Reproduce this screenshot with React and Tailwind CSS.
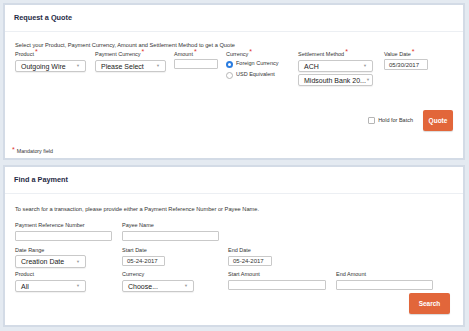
import React from "react";

const Req = () => <span className="text-[7px] text-[#e0302a] leading-none relative -top-[2px] ml-[1px]">*</span>;

const Select = ({ children, w, h = "h-[12px]" }) => (
  <div className={`${w} ${h} bg-white border border-[#c9c9c9] rounded-[2px] flex items-center justify-between pl-[5px] pr-[5px] shadow-[0_1px_1px_rgba(0,0,0,0.06)]`}>
    <span className="text-[7px] leading-none text-[#222] whitespace-nowrap">{children}</span>
    <span className="text-[4px] leading-none text-[#999]">▼</span>
  </div>
);

const Input = ({ w, h = "h-[10px]", value }) => (
  <div className={`${w} ${h} bg-white border border-[#c9c9c9] rounded-[1px] flex items-center pl-[4px]`}>
    {value && <span className="text-[6px] leading-none text-[#333] whitespace-nowrap">{value}</span>}
  </div>
);

const Label = ({ children, req }) => (
  <div className="text-[5.5px] leading-[7px] text-[#333] whitespace-nowrap">
    {children}
    {req && <Req />}
  </div>
);

export default function App() {
  return (
    <div
      className="w-[469px] h-[331px] bg-[#e4eaf1] pt-[3px] pl-[3px] pr-[4px] flex flex-col gap-[5px]"
      style={{ fontFamily: '"Liberation Sans", Arial, sans-serif' }}
    >
      {/* Panel 1 */}
      <div className="h-[157px] bg-white border-2 border-[#d3dbe6] flex flex-col">
        <div className="h-[27px] border-b border-[#eceff3] flex items-center pl-[9px]">
          <span className="text-[7.3px] font-bold text-[#1f2b45]">Request a Quote</span>
        </div>
        <div className="pl-[10px] pr-[10px] flex flex-col flex-1">
          <p className="mt-[10px] text-[5.7px] leading-[7px] text-[#333] whitespace-nowrap">
            Select your Product, Payment Currency, Amount and Settlement Method to get a Quote
          </p>
          <div className="flex mt-[1px]">
            <div className="w-[80px] flex flex-col">
              <Label req>Product</Label>
              <div className="mt-[2px]"><Select w="w-[71px]">Outgoing Wire</Select></div>
            </div>
            <div className="w-[79px] flex flex-col">
              <Label req>Payment Currency</Label>
              <div className="mt-[2px]"><Select w="w-[71px]">Please Select</Select></div>
            </div>
            <div className="w-[52px] flex flex-col">
              <Label req>Amount</Label>
              <div className="mt-[1px]"><Input w="w-[44px]" h="h-[10px]" /></div>
            </div>
            <div className="w-[72px] flex flex-col">
              <Label req>Currency</Label>
              <div className="flex items-center gap-[3px] mt-[2px] h-[8px]">
                <span className="w-[7px] h-[7px] rounded-full bg-[#2b7de0] flex items-center justify-center">
                  <span className="w-[3px] h-[3px] rounded-full bg-white" />
                </span>
                <span className="text-[5.5px] leading-none text-[#333]">Foreign Currency</span>
              </div>
              <div className="flex items-center gap-[3px] mt-[3px] h-[8px]">
                <span className="w-[7px] h-[7px] rounded-full bg-white border border-[#b5b5b5]" />
                <span className="text-[5.5px] leading-none text-[#333]">USD Equivalent</span>
              </div>
            </div>
            <div className="w-[86px] flex flex-col">
              <Label req>Settlement Method</Label>
              <div className="mt-[2px]"><Select w="w-[75px]">ACH</Select></div>
              <div className="mt-[2px]"><Select w="w-[75px]">Midsouth Bank 20...</Select></div>
            </div>
            <div className="flex flex-col">
              <Label req>Value Date</Label>
              <div className="mt-[1px]"><Input w="w-[44px]" h="h-[11px]" value="05/30/2017" /></div>
            </div>
          </div>
          <div className="flex justify-end items-center mt-[24px]">
            <div className="flex items-center gap-[3px] mr-[10px]">
              <span className="w-[7px] h-[7px] bg-white border border-[#b5b5b5] rounded-[1px]" />
              <span className="text-[5.5px] leading-none text-[#333]">Hold for Batch</span>
            </div>
            <button className="w-[30px] h-[21px] bg-[#e2663a] rounded-[2px] text-white text-[6.5px] font-bold shadow-[0_1px_1px_rgba(0,0,0,0.15)]">
              Quote
            </button>
          </div>
          <div className="mt-[17px] flex items-center -ml-[4px]">
            <Req />
            <span className="text-[5.3px] leading-none text-[#333] ml-[2px]">Mandatory field</span>
          </div>
        </div>
      </div>

      {/* Panel 2 */}
      <div className="h-[162px] bg-white border-2 border-[#d3dbe6] flex flex-col">
        <div className="h-[27px] border-b border-[#eceff3] flex items-center pl-[9px]">
          <span className="text-[7.3px] font-bold text-[#1f2b45]">Find a Payment</span>
        </div>
        <div className="pl-[10px] pr-[10px] flex flex-col">
          <p className="mt-[12px] text-[5.7px] leading-[7px] text-[#333] whitespace-nowrap">
            To search for a transaction, please provide either a Payment Reference Number or Payee Name.
          </p>
          <div className="flex mt-[9px]">
            <div className="w-[107px] flex flex-col">
              <Label>Payment Reference Number</Label>
              <div className="mt-[2px]"><Input w="w-[97px]" /></div>
            </div>
            <div className="w-[106px] flex flex-col">
              <Label>Payee Name</Label>
              <div className="mt-[2px]"><Input w="w-[97px]" /></div>
            </div>
          </div>
          <div className="flex mt-[6px]">
            <div className="w-[107px] flex flex-col">
              <Label>Date Range</Label>
              <div className="mt-[1px]"><Select w="w-[71px]" h="h-[13px]">Creation Date</Select></div>
            </div>
            <div className="w-[106px] flex flex-col">
              <Label>Start Date</Label>
              <div className="mt-[2px]"><Input w="w-[43px]" value="05-24-2017" /></div>
            </div>
            <div className="w-[108px] flex flex-col">
              <Label>End Date</Label>
              <div className="mt-[2px]"><Input w="w-[44px]" value="05-24-2017" /></div>
            </div>
          </div>
          <div className="flex mt-[3px]">
            <div className="w-[107px] flex flex-col">
              <Label>Product</Label>
              <div className="mt-[2px]"><Select w="w-[71px]">All</Select></div>
            </div>
            <div className="w-[106px] flex flex-col">
              <Label>Currency</Label>
              <div className="mt-[2px]"><Select w="w-[72px]">Choose...</Select></div>
            </div>
            <div className="w-[108px] flex flex-col">
              <Label>Start Amount</Label>
              <div className="mt-[2px]"><Input w="w-[98px]" /></div>
            </div>
            <div className="flex flex-col">
              <Label>End Amount</Label>
              <div className="mt-[2px]"><Input w="w-[97px]" /></div>
            </div>
          </div>
          <div className="flex justify-end mt-[1px] pr-[3px]">
            <button className="w-[41px] h-[21px] bg-[#e2663a] rounded-[2px] text-white text-[6.5px] font-bold shadow-[0_1px_1px_rgba(0,0,0,0.15)]">
              Search
            </button>
          </div>
        </div>
      </div>
    </div>
  );
}
